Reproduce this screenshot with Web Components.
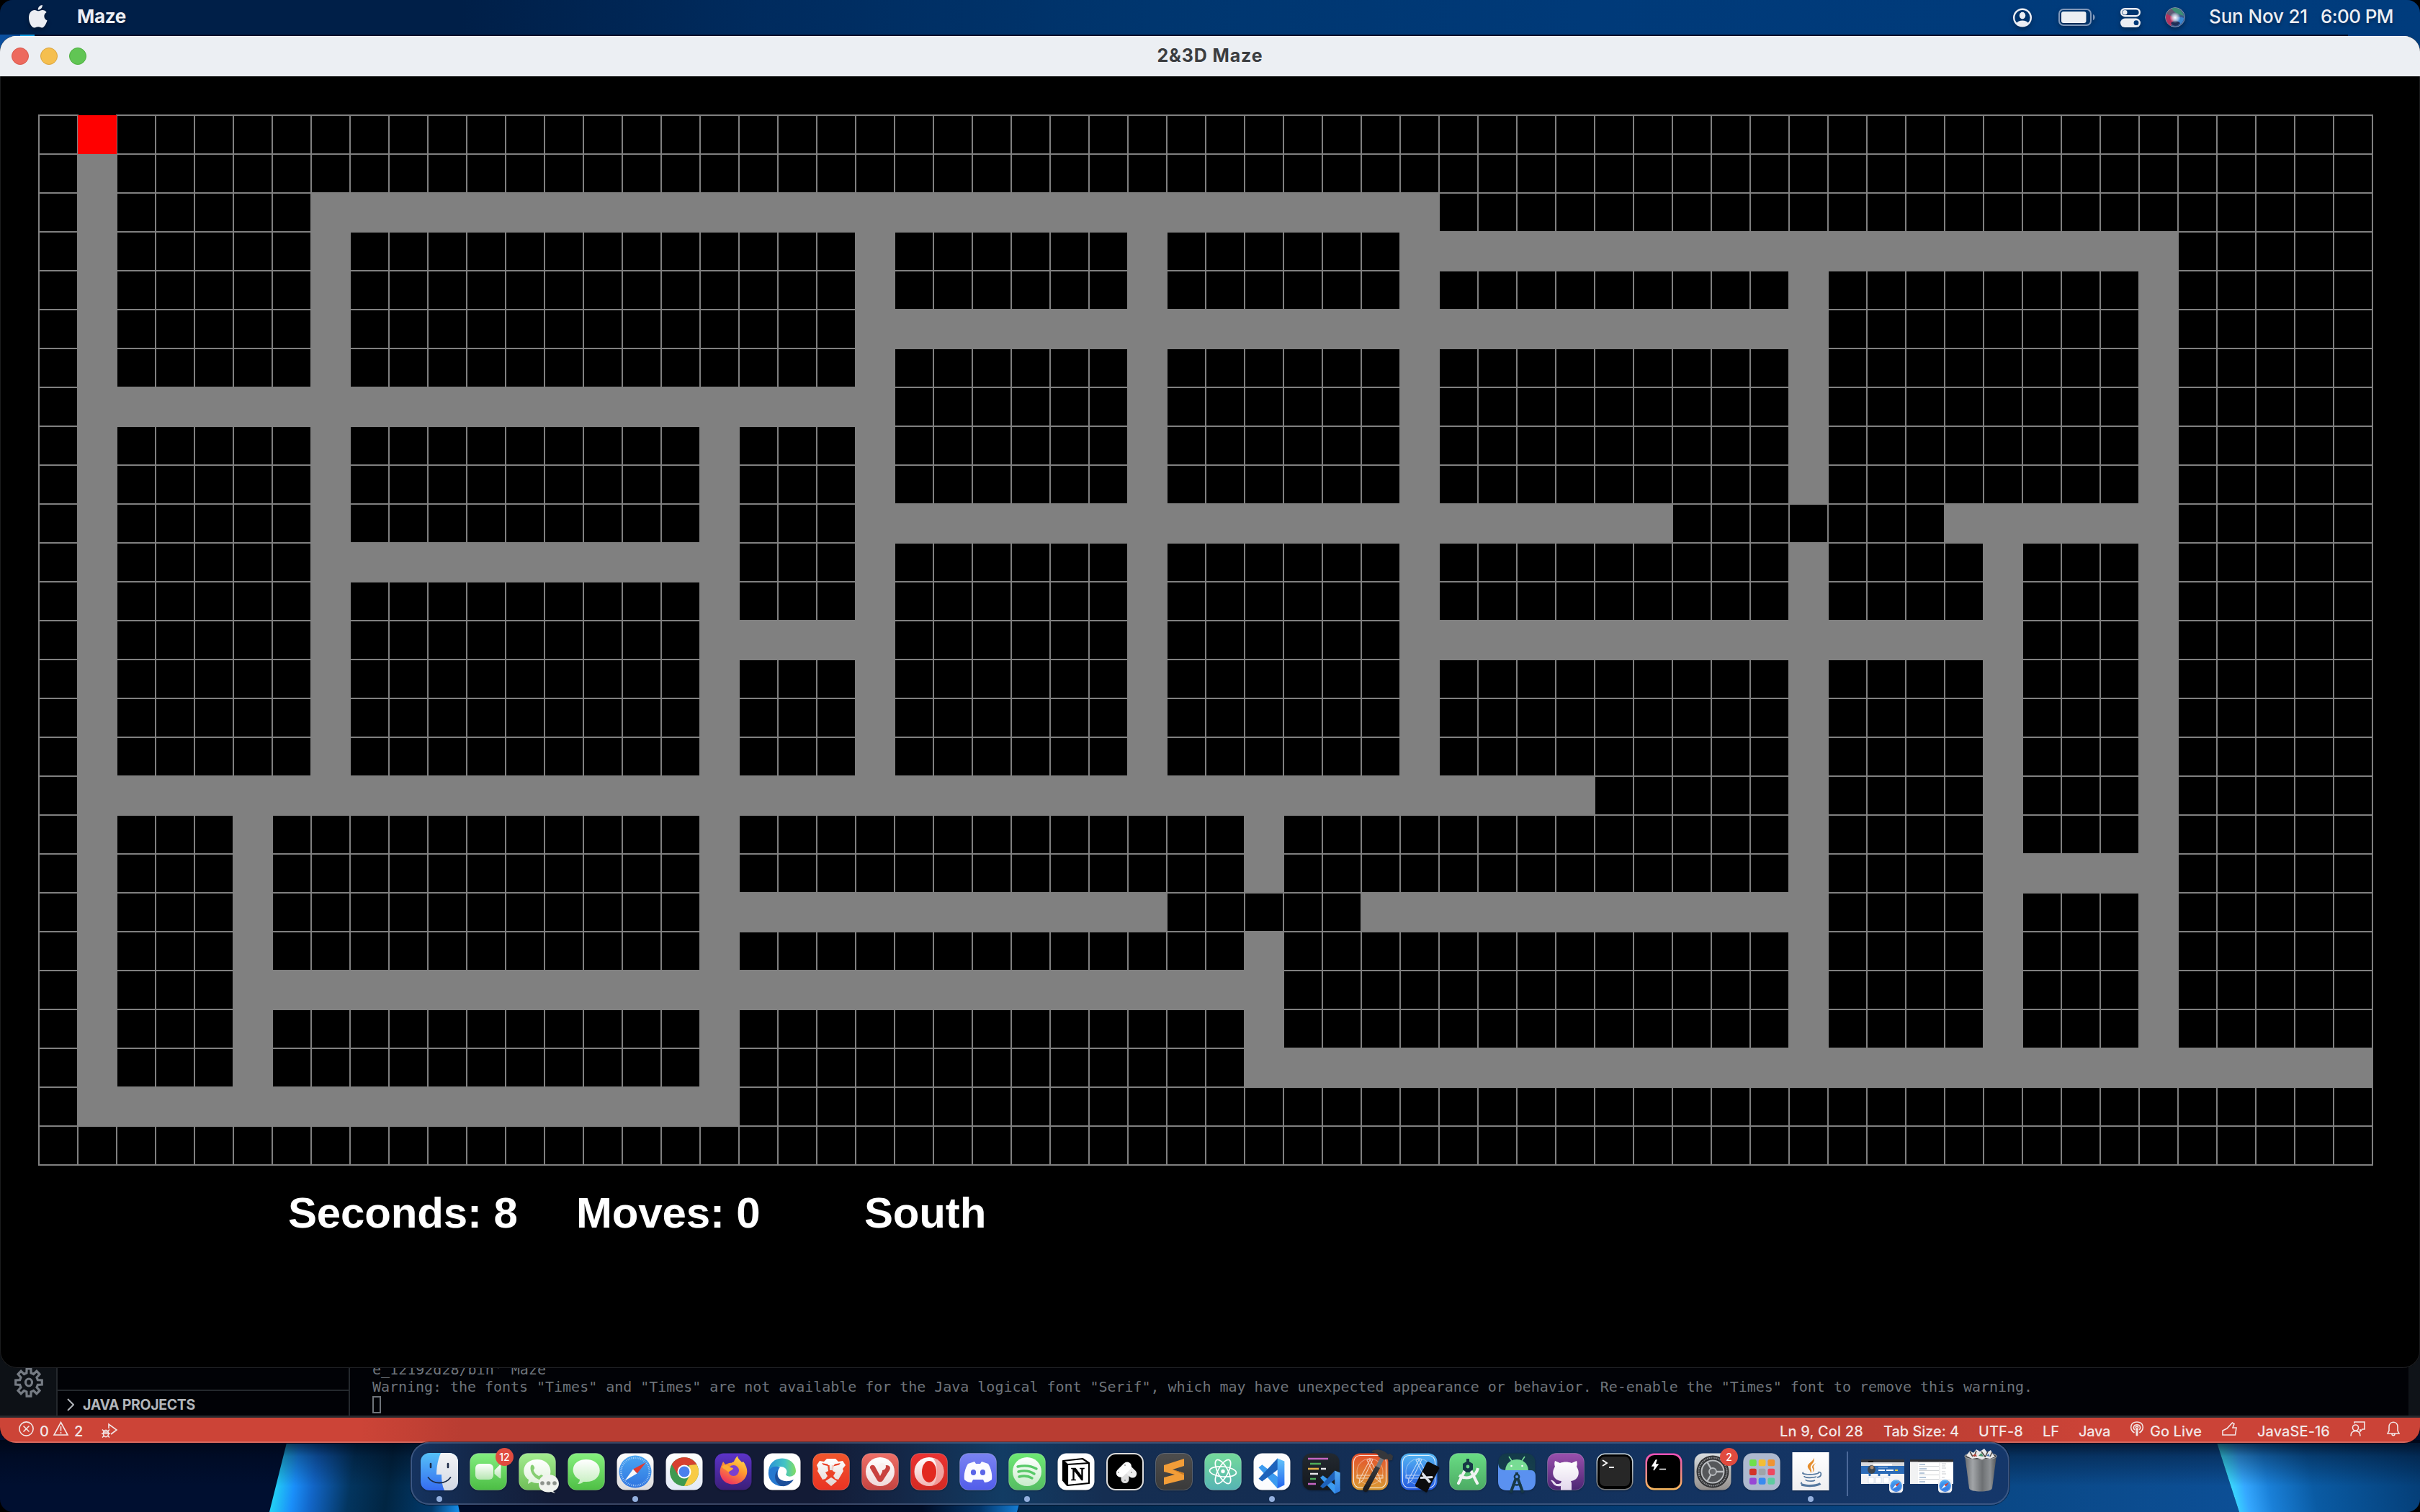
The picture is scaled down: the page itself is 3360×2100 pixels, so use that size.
<!DOCTYPE html>
<html lang="en">
<head>
<meta charset="utf-8">
<title>2&amp;3D Maze</title>
<style>
html,body{margin:0;padding:0;background:#000;overflow:hidden}
body{width:3360px;height:2100px;font-family:Inter,"Liberation Sans",sans-serif}
</style>
</head>
<body>
<mac-desktop>
  <menu-bar></menu-bar>
  <maze-window caption="2&amp;3D Maze">
    <maze-board></maze-board>
    <maze-stats><span>Seconds: 8</span><span>Moves: 0</span><span>South</span></maze-stats>
  </maze-window>
  <code-window></code-window>
  <app-dock></app-dock>
</mac-desktop>
<script>
const define = (name, html, setup) => customElements.define(name, class extends HTMLElement {
  connectedCallback() {
    if (this.shadowRoot) return;
    const root = this.attachShadow({mode: 'open'});
    root.innerHTML = typeof html === 'function' ? html(this) : html;
    if (setup) setup(this, root);
  }
});

/* Text run tracked so that it takes exactly the width given in w. */
define('fit-text', '<style>:host{display:block;flex:none;white-space:pre}span{display:inline-block;white-space:pre}</style><span><slot></slot></span>', (el, root) => {
  const w = +el.getAttribute('w'), s = root.querySelector('span');
  el.style.width = w + 'px';
  const n = el.textContent.length;
  s.style.letterSpacing = ((w - s.getBoundingClientRect().width) / n) + 'px';
});

define('mac-desktop', `<style>
:host{display:flex;flex-direction:column;align-items:center;position:relative;width:3360px;height:2100px;overflow:hidden;border-radius:18px;isolation:isolate}
.wall{position:absolute;inset:0;z-index:-1}
</style>
<svg class="wall" width="3360" height="2100" viewBox="0 0 3360 2100">
<defs>
<linearGradient id="a" gradientUnits="userSpaceOnUse" x1="384" y1="2050" x2="640" y2="2086"><stop offset="0" stop-color="#22cdf5"/><stop offset=".1" stop-color="#1a8ffa"/><stop offset=".2" stop-color="#1266c8"/><stop offset=".4" stop-color="#03355f"/><stop offset=".6" stop-color="#012542"/><stop offset=".85" stop-color="#023a6c"/><stop offset="1" stop-color="#1791ee"/></linearGradient>
<linearGradient id="b" x1="0" x2="1"><stop offset="0" stop-color="#000c28"/><stop offset=".8" stop-color="#000d26"/><stop offset=".9" stop-color="#03366a"/><stop offset=".975" stop-color="#1685e0"/><stop offset="1" stop-color="#2ac4e6"/></linearGradient>
<linearGradient id="c" x1="0" x2="1"><stop offset="0" stop-color="#02284c"/><stop offset=".45" stop-color="#043a70"/><stop offset=".8" stop-color="#0a4886"/><stop offset="1" stop-color="#0c4f96"/></linearGradient>
<linearGradient id="d" gradientUnits="userSpaceOnUse" x1="3092" y1="2052" x2="3360" y2="2000"><stop offset="0" stop-color="#3be0ff"/><stop offset=".08" stop-color="#35a8ff"/><stop offset=".2" stop-color="#1a80d8"/><stop offset=".42" stop-color="#0a5ba4"/><stop offset="1" stop-color="#043c74"/></linearGradient>
<linearGradient id="s" x1="0" y1="0" x2="0" y2="1"><stop offset="0" stop-color="#000512" stop-opacity=".8"/><stop offset=".35" stop-color="#000512" stop-opacity=".35"/><stop offset="1" stop-color="#000512" stop-opacity="0"/></linearGradient>
</defs>
<rect width="3360" height="2100" fill="#000f30"/>
<path d="M636 2000h805l-29 100H636z" fill="url(#b)"/>
<path d="M398 2004h222l18 96H374z" fill="url(#a)"/>
<path d="M1436 2004H3078L3109 2100H1413z" fill="url(#c)"/>
<path d="M3078 2004H3360V2100H3109z" fill="url(#d)"/>
<rect y="2000" width="3360" height="64" fill="url(#s)"/>
<rect y="46" width="3360" height="30" fill="#02102a"/>
<rect y="46" width="48" height="30" fill="#0b4f9e"/><rect x="28" y="46" width="20" height="5" fill="#169be0"/>
<rect x="3260" y="46" width="100" height="30" fill="#003c7c"/>
</svg><slot></slot>`);

define('menu-bar', `<style>
:host{display:flex;align-items:center;width:3360px;height:48px;margin-bottom:2px;box-sizing:border-box;padding:0 37px 3px 40px;color:#eceef3;font:500 26px Inter,"Liberation Sans",sans-serif;background:linear-gradient(90deg,#001f48 0,#001f48 640px,#002b5e 1050px,#00366f 1600px,#003a79 2200px,#003c7d)}
svg{display:block;flex:none;overflow:visible;filter:drop-shadow(0 3px 3px rgba(0,0,0,.35))}
.app{font-weight:700;margin-left:41px}
.right{display:flex;align-items:center;margin-left:auto}
fit-text{text-shadow:0 3px 4px rgba(0,0,0,.3)}
</style>
<svg width="26" height="32" viewBox="0 0 26 32" fill="#eceef3"><path d="M13.2 8.3c1.5 0 3.2-1.4 5.8-1.4 2.3 0 4.4 1.2 5.6 3-4.8 2.8-4 9.5.9 11.4C24.4 25.500 21.500 31.500 18.300 31.500c-2 0-2.800-1.200-5.200-1.200s-3.300 1.200-5.200 1.200C4 31.500 0 24.500 0 17.400 0 10.700 3.900 6.900 7.900 6.900c2.500 0 4 1.400 5.300 1.400z"/><path d="M12.800 6.700C12.500 3.300 15.600.1 18.900 0c.3 3.600-2.800 6.700-6.100 6.700z"/></svg>
<fit-text class="app" w="68">Maze</fit-text>
<div class="right">
<svg width="26" height="27" viewBox="0 0 26 27" style="margin-right:37px;margin-top:4px"><circle cx="13" cy="13.500" r="11.800" fill="none" stroke="#eceef3" stroke-width="2.400"/><ellipse cx="13" cy="10.600" rx="4.200" ry="4.900" fill="#eceef3"/><path d="M4.500 21.500c3-5.500 14-5.500 17 0-4 5.500-13 5.500-17 0z" fill="#eceef3"/></svg>
<svg width="51" height="24" viewBox="0 0 51 24" style="margin-right:35px;margin-top:2px"><rect x="1" y="1" width="44" height="22" rx="6" fill="none" stroke="#8199bb" stroke-width="2"/><rect x="4" y="4" width="34.500" height="16" rx="3" fill="#eceef3"/><path d="M48 8c3.400 1 3.400 7 0 8z" fill="#8199bb"/></svg>
<svg width="28" height="27" viewBox="0 0 28 27" style="margin-right:34px;margin-top:4px"><rect x="1.200" y="1.200" width="25.600" height="10" rx="5" fill="none" stroke="#eceef3" stroke-width="2.400"/><circle cx="6.300" cy="6.200" r="3.200" fill="#eceef3"/><rect y="14.600" width="28" height="12.400" rx="6.200" fill="#eceef3"/><circle cx="22" cy="20.700" r="3.400" fill="#003a79"/></svg>
<svg width="28" height="28" viewBox="0 0 28 28" style="margin-right:33px;margin-top:2px"><defs><radialGradient id="w"><stop offset="0" stop-color="#fff"/><stop offset=".4" stop-color="#dfe6f4" stop-opacity=".8"/><stop offset="1" stop-color="#fff" stop-opacity="0"/></radialGradient><linearGradient id="g" x1="0" y1="0" x2="1" y2="1"><stop offset="0" stop-color="#7c5562"/><stop offset=".5" stop-color="#4b6284"/><stop offset="1" stop-color="#224f9c"/></linearGradient></defs><circle cx="14" cy="14" r="13.400" fill="url(#g)" stroke="#8294ac" stroke-width="1"/><path d="M9 2c7-3 15 2 17 10-6-2-12-3-17-10z" fill="#3d8f76"/><path d="M2 9c-3 7 1 14 6 17 3-5 5-8 4-12C9 12 5 11 2 9z" fill="#b03560"/><path d="M15 15c4-2 8-1 11 0 0 5-4 9-8 10z" fill="#3b86cf"/><path d="M8 22c4-4 9-4 13 0-3 5-10 5-13 0z" fill="#1f2f57"/><circle cx="14" cy="14.500" r="7.500" fill="url(#w)"/></svg>
<fit-text w="137">Sun Nov 21</fit-text><fit-text w="101" style="margin-left:18px">6:00 PM</fit-text>
</div>`);

define('maze-window', el => `<style>
:host{display:flex;flex-direction:column;position:relative;z-index:2;width:3360px;height:1850px;box-sizing:border-box;background:#000;border-radius:22px 22px 24px 24px;overflow:hidden;box-shadow:inset 0 -1px 0 #202124,inset 1px 0 0 #1b1c1d,inset -1px 0 0 #1b1c1d}
header{display:grid;grid-template-columns:1fr auto 1fr;align-items:center;height:56px;flex:none;background:#eceff3;padding:0 16px;color:#3b3d40;font:700 25px Inter,"Liberation Sans",sans-serif;box-shadow:inset 0 1px 0 #fff}
.lights{display:flex;gap:16px}
i{width:24px;height:24px;border-radius:50%;box-sizing:border-box;border:1px solid #d8584c;background:#ed6a5e}
i:nth-child(2){background:#f5bf4f;border-color:#d9a33d}i:nth-child(3){background:#61c554;border-color:#4dae3f}
fit-text{margin-top:-2px}
</style><header><div class="lights"><i></i><i></i><i></i></div><fit-text w="147">${el.getAttribute('caption').replace('&','&amp;')}</fit-text><span></span></header><slot></slot>`);

const CELL = 54, COLS = 60, ROWS = 27;
/* Corridors as [row, first column, last column] and [column, first row, last row]. */
const ACROSS = [[2,7,35],[3,35,54],[5,21,45],[7,1,21],[10,21,41],[10,49,54],[11,7,17],[13,17,21],[13,35,50],[17,1,39],[19,50,54],[20,17,28],[20,34,45],[22,5,31],[24,31,59],[25,1,17]];
const DOWN = [[1,1,25],[5,17,25],[7,2,17],[17,7,25],[21,2,17],[28,2,17],[31,17,19],[31,21,24],[35,2,17],[45,3,9],[45,11,24],[50,10,24],[54,3,24]];
define('maze-board', () => {
  let lines = '', fills = '';
  for (let c = 0; c <= COLS; c++) lines += `M${c*CELL} 0V${ROWS*CELL}`;
  for (let r = 0; r <= ROWS; r++) lines += `M-1 ${r*CELL}H${COLS*CELL+1}`;
  const rect = (x, y, w, h) => `<rect x="${x*CELL-1}" y="${y*CELL-1}" width="${w*CELL+2}" height="${h*CELL+2}"/>`;
  ACROSS.forEach(([r, a, b]) => fills += rect(a, r, b-a+1, 1));
  DOWN.forEach(([c, a, b]) => fills += rect(c, a, 1, b-a+1));
  return `<style>:host{display:block;margin:54px 0 0 54px}svg{display:block;overflow:visible}</style>
<svg width="${COLS*CELL}" height="${ROWS*CELL}" shape-rendering="crispEdges"><path d="${lines}" stroke="#808080" stroke-width="2"/><g fill="#808080">${fills}</g><rect x="${CELL+1}" y="-1" width="${CELL-2}" height="1" fill="#000"/><rect x="${CELL}" width="${CELL}" height="${CELL}" fill="#f00"/></svg>`;
});

define('maze-stats', `<style>:host{display:flex;margin:32px 0 0 400px;color:#fff;font:700 60px/70px "Liberation Sans",Arial,sans-serif;letter-spacing:-.15px}::slotted(span){width:400px;white-space:pre}</style><slot></slot>`);

define('code-window', `<style>
:host{display:flex;flex-direction:column;position:relative;z-index:1;width:3360px;height:130px;margin-top:-26px;box-sizing:border-box;border-radius:0 0 22px 22px;overflow:hidden;background:#010206;box-shadow:0 0 0 1px #00081c;flex:none}
.work{display:flex;height:92px;flex:none;border-bottom:3px solid #27292e}
.activity{width:80px;box-sizing:border-box;padding:25px 0 0 20px;background:#0d1116;border-right:2px solid #24282d}
.side{width:406px;box-sizing:border-box;border-right:2px solid #24282d;display:flex;flex-direction:column}
.side .top{height:58px;border-bottom:2px solid #24282d;box-sizing:border-box;flex:none}
.side .row{display:flex;align-items:center;height:34px;padding:2px 0 0 13px;box-sizing:content-box;gap:12px;color:#b1b5ba;font:700 19.500px/34px Inter,sans-serif}
.term{flex:1;padding:16px 0 0 31px;color:#6e747b;font:20px/24px "DejaVu Sans Mono",monospace;overflow:hidden;box-sizing:border-box;height:92px}
.cur{width:12px;height:24px;box-sizing:border-box;border:2px solid #6e747b;margin-top:1px}
.edge{width:16px;background:#0f1318}
.status{display:flex;align-items:center;height:35px;padding:0 28px 0 26px;color:#f2e6e6;font:500 20px Inter,sans-serif;background:linear-gradient(90deg,#cc4437 0,#cc4437 500px,#b93d32 640px,#b93d32 2600px,#cb4337 2900px,#cb4337);box-shadow:inset 0 -2px 0 rgba(255,255,255,.2)}
.status fit-text{margin-top:2px}
.status svg{flex:none;display:block;fill:none;stroke:#f2e6e6;stroke-width:1.600;overflow:visible;margin-top:-5px}
.sp{flex:1}
svg{display:block}
</style>
<div class="work"><div class="activity"><svg width="40" height="42" viewBox="-20 -21 40 42" fill="none" stroke="#757b83" stroke-width="3.200" id="gear"></svg></div>
<div class="side"><div class="top"></div><div class="row"><svg width="10" height="18" viewBox="0 0 10 18" fill="none" stroke="#b1b5ba" stroke-width="2"><path d="M1 1l8 8-8 8"/></svg><fit-text w="156">JAVA PROJECTS</fit-text></div></div>
<div class="term"><fit-text w="241">e_12192d28/bin' Maze</fit-text><fit-text w="2305" id="warn">Warning: the fonts "Times" and "Times" are not available for the Java logical font "Serif", which may have unexpected appearance or behavior. Re-enable the "Times" font to remove this warning.</fit-text><div class="cur"></div></div><div class="edge"></div></div>
<div class="status">
<svg width="21" height="21" viewBox="0 0 21 21"><circle cx="10.500" cy="10.500" r="9.600"/><path d="M6.500 6.500l8 8M14.500 6.500l-8 8"/></svg>
<fit-text w="12" style="margin-left:8px">0</fit-text>
<svg width="21" height="20" viewBox="0 0 21 20" style="margin-left:7px"><path d="M10.500 1.500L20 19H1zM10.500 7v6.500M10.500 15v2"/></svg>
<fit-text w="12" style="margin-left:8px">2</fit-text>
<svg width="22" height="20" viewBox="0 0 22 20" style="margin-left:26px;margin-top:0"><path d="M10 7V1l11 8-8 6"/><ellipse cx="6" cy="14" rx="3.600" ry="4.600"/><path d="M0 14h12M1 8.500l2.500 2.500M11 8.500L8.500 11M1 19.500L3.500 17M11 19.500L8.500 17M3 12h6"/></svg>
<span class="sp"></span>
<fit-text w="116">Ln 9, Col 28</fit-text>
<fit-text w="105" style="margin-left:28px">Tab Size: 4</fit-text>
<fit-text w="62" style="margin-left:27px">UTF-8</fit-text>
<fit-text w="23" style="margin-left:27px">LF</fit-text>
<fit-text w="44" style="margin-left:27px">Java</fit-text>
<svg width="18" height="20" viewBox="0 0 18 20" style="margin-left:28px"><path d="M5.500 16C-2.500 11 0 1 9 1s11.500 10 3.500 15M6 12C2.500 9 5 4.800 9 4.800S15.500 9 12 12"/><circle cx="9" cy="8.500" r="1.600"/><path d="M8 11.500h2l-.4 8h-1.200z"/></svg>
<fit-text w="72" style="margin-left:9px">Go Live</fit-text>
<svg width="21" height="19" viewBox="0 0 21 19" style="margin-left:28px"><path d="M1 18V12L7 9 14.500 1l2.500 1.500-2 5.500h5l-1.500 10z"/></svg>
<fit-text w="101" style="margin-left:28px">JavaSE-16</fit-text>
<svg width="21" height="21" viewBox="0 0 21 21" style="margin-left:28px"><path d="M6 3V1h14v10h-3l-3 3v-3"/><circle cx="7.500" cy="9" r="4"/><path d="M1 20.500c0-4.500 2.500-7 6.500-7s6.500 2.500 6.500 7"/></svg>
<svg width="18" height="21" viewBox="0 0 18 21" style="margin-left:30px"><path d="M1 17l2-4V8c0-9 12-9 12 0v5l2 4zM7 17.500c0 3 4 3 4 0"/></svg>
</div>`, (el, root) => {
  let d = '';
  for (let i = 0; i < 8; i++) {
    const p = (a, r) => { const t = (i*45 + a - 90) * Math.PI/180; return (r*Math.cos(t)).toFixed(1) + ' ' + (r*1.05*Math.sin(t)).toFixed(1); };
    d += (i ? 'L' : 'M') + p(-9, 18.5) + 'L' + p(9, 18.5) + 'L' + p(14, 12.8) + 'L' + p(31, 12.8);
  }
  root.getElementById('gear').innerHTML = `<path d="${d}z"/><ellipse rx="4.500" ry="5"/>`;
});

/* Dock artwork on a 52 x 52 tile. */
const tile = (fill, extra = '') => `<rect x=".5" y=".5" width="51" height="51" rx="12" fill="${fill}" ${extra}/>`;
const grad = (id, a, b) => `<linearGradient id="${id}" x1="0" y1="0" x2="0" y2="1"><stop offset="0" stop-color="${a}"/><stop offset="1" stop-color="${b}"/></linearGradient>`;
const RIM = 'stroke="#fff" stroke-opacity=".22"';
const compass = (() => { let t = ''; for (let i = 0; i < 48; i++) { const a = i*Math.PI/24; t += `M${(26+21*Math.cos(a)).toFixed(1)} ${(26+20.500*Math.sin(a)).toFixed(1)}L${(26+18.500*Math.cos(a)).toFixed(1)} ${(26+18*Math.sin(a)).toFixed(1)}`; }
  return `<circle cx="26" cy="26" r="22.500" fill="url(#c)"/><path d="${t}" stroke="#c8e2f8" stroke-width=".8"/><path d="M41 13L23 22.500l5.500 6z" fill="#e23b30"/><path d="M11.500 38.500L23 22.500l5.500 6z" fill="#f6f7f9"/>`; })();
const star = '<g fill="none" stroke="#fff" stroke-opacity=".65" stroke-width="1.100"><rect x="3.500" y="3.500" width="45" height="45" rx="9" stroke-opacity=".85"/><circle cx="26" cy="26" r="18" stroke-opacity=".35"/><path d="M22 10l3.500-2L39 33l2 8-6-5zM30 9l-3-1L12 36l-1 6 5-4zM8 31h36v4H8z"/></g>';
const code = (x, y, s) => `<g transform="translate(${x} ${y}) scale(${s})"><path d="M0 11l5-4 32 25-10 9z" fill="#3c9bf0"/><path d="M0 27l5 4L37 7 27-2z" fill="#1d62bb"/><path d="M27-2l10 4v34l-10 5z" fill="url(#v)"/></g>`;
const ICONS = {
finder: () => `<defs>${grad('f','#55c1f8','#356bf0')}${grad('h','#f3f4f6','#d3d9e4')}<clipPath id="k"><rect width="52" height="52" rx="12"/></clipPath></defs><g clip-path="url(#k)"><rect width="52" height="52" fill="url(#f)"/><path d="M28 0c-4 9-6 20-6 30h7c0 8 1 16 4 22h19V0z" fill="url(#h)"/></g><path d="M14 15v5M38 15v5" stroke="#1d2b47" stroke-width="2.600" stroke-linecap="round"/><path d="M10.500 34c7 10 24 10 31 0" fill="none" stroke="#1c2c4a" stroke-width="1.800" stroke-linecap="round"/>`,
facetime: () => `<defs>${grad('f','#83ee80','#4cbd44')}${grad('h','#fff','#b6e6b2')}</defs>${tile('url(#f)',RIM)}<rect x="8" y="15" width="25" height="22" rx="6" fill="url(#h)"/><path d="M34.500 24l7-7c1-1 2 0 2 1v16c0 1-1 2-2 1l-7-6z" fill="url(#h)"/>`,
whatsapp: () => `<defs>${grad('f','#a3ec90','#6fbe57')}${grad('h','#fff','#dff2da')}</defs>${tile('url(#f)',RIM)}<path d="M26 9c24 0 25 33 0 33-3 0-6-1-8-2l-5 3 1-6C2 29 6 9 26 9z" fill="url(#h)"/><path d="M17 18c2-3 4-1 5 2 1 2-2 3-1 5 2 4 5 6 7 7 2 0 3-3 5-1 3 2 3 3 1 5-7 5-20-8-17-18z" fill="#86ce72"/><path d="M41 30c18 0 19 20 7 23l3 3-6-2c-8 2-17-2-17-11 0-8 6-13 13-13z" fill="#f0f3ee"/><g fill="#8d938c"><circle cx="33" cy="42" r="2.800"/><circle cx="41.500" cy="42" r="2.800"/><circle cx="50" cy="42" r="2.800"/></g>`,
messages: () => `<defs>${grad('f','#86f07f','#4fbf45')}${grad('h','#fff','#c6eec0')}</defs>${tile('url(#f)',RIM)}<path d="M26 9c25 0 25 31 0 31h-4c-2 2-4 3-8 3 2-2 3-4 3-6C3 31 4 9 26 9z" fill="url(#h)"/>`,
safari: () => `<defs>${grad('f','#fff','#dcdbdc')}${grad('c','#4aa6f2','#2f74e0')}</defs>${tile('url(#f)')}${compass}`,
chrome: () => `<defs>${grad('f','#fff','#e3e9f7')}</defs>${tile('url(#f)')}<circle cx="26" cy="26" r="20" fill="#3f9a50"/><path d="M8.700 16A20 20 0 0 1 43.300 16L26 18z" fill="#d6402f"/><path d="M43.300 16A20 20 0 0 1 26 46l8-16-1-13z" fill="#f8cb46"/><path d="M8.700 16h34.600H26l-9 14z" fill="#d6402f"/><circle cx="26" cy="26" r="9.500" fill="#fff"/><circle cx="26" cy="26" r="7.500" fill="#4a80ec"/>`,
firefox: () => `<defs>${grad('f','#5c33c9','#3b1f78')}<linearGradient id="h" x1=".8" y1="0" x2=".3" y2="1"><stop offset="0" stop-color="#ffe24f"/><stop offset=".45" stop-color="#ff9a2f"/><stop offset="1" stop-color="#ee2f63"/></linearGradient></defs>${tile('url(#f)')}<path d="M9 19l3-7 3 4c4-1 6-3 8-2l4-2c1-3 3-6 5-8 0 4 4 6 6 9l2-1c7 9 6 17 3 22-7 12-26 13-33 1-3-6-3-11-1-16z" fill="url(#h)"/><circle cx="26.500" cy="24.500" r="7.500" fill="#7b3fd0"/><path d="M10 19c5-4 8-3 12 1l4 1c-1 4-5 3-6 6-4-4-7-4-10-8z" fill="#ffab35"/>`,
edge: () => `<defs><linearGradient id="f"><stop offset="0" stop-color="#2a92d6"/><stop offset=".6" stop-color="#43c4c4"/><stop offset="1" stop-color="#82dd62"/></linearGradient></defs>${tile('#fff')}<path d="M7 26C8 1 44 2 45 25c0 8-11 10-14 5 4-6-1-12-9-11-8 0-13 4-15 7z" fill="url(#f)"/><path d="M7 26c2-6 9-9 16-6-5 5-5 18 6 22l-3 4C15 46 6 38 7 26z" fill="#2478cf"/><path d="M20 24c-4 9 5 20 22 13-4 6-10 10-17 9-9-4-12-15-5-22z" fill="#1c4f9b"/>`,
brave: () => `<defs>${grad('f','#f0562c','#ea3323')}${grad('h','#fff','#e2d5d2')}</defs>${tile('url(#f)',RIM)}<path d="M6 17l4-6 6 1 4-4h12l4 4 6-1 4 6-4 5 1 3-7 12-4-1-3-4 3-5-4-2 1-8h-8l1 8-4 2 3 5-3 4-4 1-7-12 1-3zM18 39l8-5 8 5-2 2-6 5-6-5z" fill="url(#h)"/><path d="M13 14l8 1.500 2 3-8-2zM39 14l-8 1.500-2 3 8-2z" fill="#ea4228"/><path d="M23.500 14h5l-.5 10h-4z" fill="url(#h)"/>`,
vivaldi: () => `<defs>${grad('f','#ee7068','#c44340')}${grad('h','#fff','#f0dada')}</defs>${tile('url(#f)',RIM)}<circle cx="26" cy="26" r="20" fill="url(#h)"/><path d="M12 21c-1-4 5-6 7-2l7 13 3-6c0-5 2-9 6-9 5 0 6 4 4 7l-9 14c-2 3-6 3-8 0z" fill="#c9423f"/><circle cx="29" cy="19" r="5" fill="#faf0ef"/>`,
opera: () => `<defs>${grad('f','#ec3333','#d22a23')}${grad('h','#fff','#f3b8b6')}</defs>${tile('url(#f)',RIM)}<ellipse cx="26" cy="26" rx="20.500" ry="20" fill="url(#h)"/><path d="M30 7c9 3 9 35 0 38 22-2 22-36 0-38z" fill="#ef8a88" opacity=".7"/><ellipse cx="26" cy="26" rx="10" ry="15" fill="#e2291f"/>`,
discord: () => `<defs>${grad('f','#7a83f2','#525dea')}</defs>${tile('url(#f)',RIM)}<path d="M12 15l9-3 2 3h6l2-3 9 3c4 6 6 15 5 22-4 3-7 4-10 4l-2-4H19l-2 4c-3 0-7-1-10-4-1-7 1-16 5-22z" fill="#fbfbff"/><ellipse cx="19.500" cy="27" rx="3.600" ry="4" fill="#5a65e8"/><ellipse cx="32.500" cy="27" rx="3.600" ry="4" fill="#5a65e8"/>`,
spotify: () => `<defs>${grad('f','#6ee874','#55bd62')}${grad('h','#fff','#c9eccb')}</defs>${tile('url(#f)',RIM)}<circle cx="26" cy="26" r="20" fill="url(#h)"/><path d="M13 19c9-2 19-1 26 3M14 26c8-2 16-1 22 3M15 33c7-2 13-1 18 2" fill="none" stroke="#58c968" stroke-width="3.400" stroke-linecap="round"/>`,
notion: () => `${tile('#fff')}<path d="M8 11l27-3 9 6v28l-30 3-6-7z" fill="#fff" stroke="#000" stroke-width="2.200" stroke-linejoin="round"/><path d="M8 11l6 5v29M14 16l30-2" fill="none" stroke="#000" stroke-width="2.200"/><path d="M8 11l6 5v29l-6-7z"/><text x="28.500" y="38" text-anchor="middle" font-family="Liberation Serif" font-weight="700" font-size="26" stroke="#000" stroke-width=".6">N</text>`,
patch: () => `<rect x="1" y="1" width="50" height="50" rx="12" fill="#000" stroke="#dcdcdc" stroke-width="2"/><g><rect x="20.500" y="21" width="11" height="21" rx="5.500" fill="#dedede"/><rect x="22" y="14" width="11.500" height="24" rx="5.700" fill="#ededed" transform="rotate(-45 28 20)"/><rect x="19" y="10" width="12" height="25" rx="6" fill="#fff" transform="rotate(45 24 22)"/></g><g fill="#555"><circle cx="26" cy="17" r=".8"/><circle cx="17" cy="27" r=".8"/><circle cx="35" cy="27" r=".8"/><circle cx="26" cy="38" r=".8"/></g>`,
sublime: () => `<defs>${grad('f','#4d4d4d','#3a3a3a')}</defs>${tile('url(#f)',RIM)}<path d="M12 17l28-9v10l-16 5 16 5v9l-28 7V34l15-4-15-4z" fill="#f29d38"/><path d="M24 23l16 5v3z" fill="#d17f22"/>`,
atom: () => `<defs>${grad('f','#74da9a','#56b4b4')}</defs>${tile('url(#f)',RIM)}<g fill="none" stroke="#fff" stroke-width="1.700"><ellipse cx="26" cy="26" rx="18.500" ry="7" transform="rotate(5 26 26)"/><ellipse cx="26" cy="26" rx="18.500" ry="7" transform="rotate(62 26 26)"/><ellipse cx="26" cy="26" rx="18.500" ry="7" transform="rotate(118 26 26)"/></g><circle cx="26" cy="25.500" r="2.700" fill="#fff"/>`,
vscode: () => `<defs>${grad('v','#63c4fa','#2263ee')}</defs>${tile('#fcfcfe')}${code(7.5,9.5,.97)}`,
insiders: () => `<defs>${grad('f','#232930','#14181d')}${grad('v','#55aaf2','#2b7be0')}</defs>${tile('url(#f)')}<g stroke-width="2.600"><path d="M8 8h28M8 43h11" stroke="#c565c2"/><path d="M11 15h15M11 36h8" stroke="#4fae5a"/><path d="M8 22h15" stroke="#e5b045"/><path d="M26 22h7M11 29h11" stroke="#e6e6ea"/></g>${code(25,26,.75)}`,
xcode: () => `<defs>${grad('f','#e5502c','#d99b34')}${grad('h','#3c3d41','#17181b')}</defs>${tile('url(#f)')}${star}<path d="M41 5l5 2.500-7 14.500-5-2.500z" fill="#77797d"/><path d="M34 18l6 3-16.500 31c-2 4-9 1-7-3z" fill="url(#h)"/><path d="M29-3c8-3 17-1 22 5l3-1 4 3-1 6-5 .5-2-2-4 1-8-4c0-4-4-6-9-6.500z" fill="#36373b"/>`,
simulator: () => `<defs>${grad('f','#55b6f3','#2358e0')}</defs>${tile('url(#f)')}${star}<path d="M39 12l14 7c1 1 2 2 1 3L38 53c-1 2-2 2-3 1l-13-7c-1-1-1-2-1-3l16-31z" fill="#0c0c0d"/><path d="M31 26l12 14-3 2-10-12zM28 33l17-1 .5 3L28 36z" fill="#dfe3ea"/>`,
studio: () => `<defs>${grad('f','#69dc84','#4cab64')}</defs>${tile('url(#f)',RIM)}<path d="M13 42l11-22M39 42L28 20" stroke="#f1f3f2" stroke-width="4" stroke-linecap="round"/><path d="M14 31c10 7 23 3 26-10" fill="none" stroke="#f1f3f2" stroke-width="4"/><path d="M24 8h4v4l5 3v8l-5 4h-4l-5-4v-8l5-3z" fill="#173846"/><circle cx="26" cy="19" r="2.400" fill="#69dc84"/>`,
preview: () => `<defs>${grad('f','#133a49','#1a4250')}</defs>${tile('url(#f)')}<path d="M0 13c0 10 6 11 14 11h32c4 0 6 4 6 8v7c0 9-5 13-12 13H12C4 52 0 47 0 40z" fill="#5a91f0"/><path d="M10 24c1-20 31-20 32 0z" fill="#78dc94"/><path d="M15 5l4 6M37 5l-4 6" stroke="#78dc94" stroke-width="1.600"/><circle cx="18.500" cy="18" r="1.300" fill="#fff"/><circle cx="33.500" cy="18" r="1.300" fill="#fff"/><circle cx="26" cy="33" r="3.200" fill="none" stroke="#173846" stroke-width="2.400"/><path d="M26 27v3M24.500 36l-7 19M27.500 36l7 19" stroke="#173846" stroke-width="4"/><path d="M20 43c4 2 8 2 12 0" stroke="#173846" stroke-width="2.400" fill="none"/>`,
github: () => `<defs>${grad('f','#9a50ad','#4c2673')}${grad('h','#fff','#e3d8ec')}</defs>${tile('url(#f)',RIM)}<path d="M11 11l7 3c5-2 11-2 16 0l7-3c1 3 1 5 0 8 6 9 2 19-8 20 1 2 1 3 1 5v7.500H19V46c-6 1-9-1-11-4-1-2-2-3-3-4 4-1 6 4 8 5 2 0 4 0 6-1l1-3C9 38 5 28 11 19c-1-3-1-5 0-8z" fill="url(#h)"/>`,
terminal: () => `<defs>${grad('f','#dbe9ef','#777')}</defs>${tile('url(#f)')}<rect x="2" y="2" width="48" height="48" rx="10" fill="#000"/><rect x="5" y="5" width="42" height="41" rx="7" fill="#272727"/><path d="M9 10l6 4-6 4M18 20h7" fill="none" stroke="#fff" stroke-width="1.900"/>`,
hyper: () => `<defs>${grad('f','#ee4fb8','#f8b95c')}</defs>${tile('url(#f)')}<rect x="3" y="3" width="46" height="46" rx="10" fill="#000"/><path d="M15 10l-5 8h4l-2 6 6-8h-4l2-6zM20 22.500h9" fill="#fff" stroke="#fff" stroke-width="1.300"/>`,
settings: () => `<defs>${grad('f','#d8dcde','#938f8c')}</defs>${tile('url(#f)')}<circle cx="26" cy="26" r="22.500" fill="#303133"/><circle cx="26" cy="26" r="19.500" fill="none" stroke="#8a8c8f" stroke-width="2.200" stroke-dasharray="1.600 1"/><circle cx="26" cy="26" r="15.500" fill="#55575a" stroke="#b9bcbf" stroke-width="2"/><path d="M26 26h16M26 26l-8-14M26 26l-8 14" stroke="#b9bcbf" stroke-width="2.400"/><circle cx="26" cy="26" r="5" fill="#66686b" stroke="#b9bcbf" stroke-width="1.800"/>`,
launchpad: () => { const c = ['#6fdf4b','#f3bd35','#ef9334','#d23328','#9fa4a9','#ee4860','#9747d5','#3a8af0','#5fcba0']; return tile('#adb9cf', RIM) + c.map((f, i) => `<rect x="${9 + i%3*12.700}" y="${9 + (i/3|0)*12.700}" width="9.800" height="9.300" rx="2.200" fill="${f}"/>`).join(''); },
java: () => `<defs>${grad('f','#fff','#efeff1')}</defs><rect x=".5" y="-1" width="51" height="53" fill="url(#f)"/><path d="M30 5c3 6-10 9-8 15 1 3 4 4 4 8 3-4-1-6 0-9 1-4 7-6 4-14zM33 14c-5 3-6 5-4 8 1 2 0 4-1 5 5-3 2-6 2-8 0-1 1-3 3-5z" fill="#e58d2c"/><g fill="none" stroke="#55789f" stroke-width="1.700"><path d="M16 27c-6 3 14 4 21 1M36 27c6-2 6 6-1 7M17 32c0 3 12 3 17 1M19 37c0 2 9 3 13 1M14 41c-7 3 15 6 25 1M13 45c9 2 21 2 27-2"/></g>`
};
define('dock-icon', el => `<style>
:host{display:flex;flex-direction:column;align-items:center;position:relative;width:52px;flex:none}
svg{display:block;overflow:visible;filter:drop-shadow(0 1px 1px rgba(0,0,0,.3))}
.dot{width:8px;height:8px;border-radius:50%;background:#93afdd;margin-top:8px;visibility:${el.hasAttribute('running') ? 'visible' : 'hidden'}}
.badge{position:absolute;right:-9px;top:-7px;width:25px;height:25px;border-radius:50%;background:#e04b3f;color:#fff;font:500 14px/25px Inter,sans-serif;text-align:center}
</style><svg width="52" height="52" viewBox="0 0 52 52">${ICONS[el.getAttribute('name')]()}</svg><div class="dot"></div>${el.hasAttribute('badge') ? `<div class="badge">${el.getAttribute('badge')}</div>` : ''}`);

define('dock-preview', el => {
  const site = el.getAttribute('kind') === 'site';
  const page = site
    ? `<rect width="60" height="34" fill="#f3f4f6"/><rect width="60" height="4" fill="#34363b"/><rect x="10" y="2.500" width="7" height="2" fill="#000"/><rect y="4" width="60" height="5" fill="#d9dbde"/><rect y="9" width="60" height="11" fill="#2c6cb8"/><rect x="17" y="6" width="26" height="2.500" fill="#fff"/><ellipse cx="14.500" cy="14" rx="5.500" ry="6" fill="#3c4650"/><circle cx="15" cy="11" r="2.500" fill="#a98b70"/><path d="M24 15h9M35 15h10" stroke="#fff" stroke-width="2"/><path d="M24 11h13" stroke="#9dc0e8"/><path d="M47 15h4" stroke="#f1cf3b" stroke-width="2"/><g fill="#2c6cb8"><circle cx="12" cy="21.500" r="1.700"/><circle cx="25" cy="21.500" r="1.700"/><circle cx="39" cy="21.500" r="1.700"/></g><g fill="#fff" stroke="#c5d4e5" stroke-width=".6"><rect x="10" y="25" width="8" height="8"/><rect x="20" y="25" width="8" height="8"/><rect x="31" y="25" width="8" height="8"/></g>`
    : `<rect width="60" height="34" fill="#fff"/><rect width="60" height="3.500" fill="#2c2d31"/><rect y="3.500" width="11" height="30.500" fill="#f1f2f3"/><path d="M41 3.500v30.500" stroke="#e0e1e3"/><path d="M12 9.500h28M12 15.500h28M12 21.500h28M12 27.500h28" stroke="#c3c6ca" stroke-width=".8"/><path d="M13 7h8M13 13h10M13 19h7M13 25h9M13 31h8" stroke="#6c8fb5"/><path d="M44 6h6M44 9h5M44 12h6M44 17h5M44 20h6M44 25h4" stroke="#c9ccd0"/>`;
  return `<style>:host{display:block;width:60px;height:45px;flex:none;margin-top:9px}svg{display:block;overflow:visible}</style><svg width="60" height="45" viewBox="0 0 60 45"><defs>${grad('c','#4aa6f2','#2f74e0')}</defs>${page}<g transform="translate(39 27) scale(.37)"><rect width="52" height="52" rx="12" fill="#f2f2f4"/>${compass}</g></svg>`;
});

define('dock-trash', `<style>:host{display:block;width:46px;height:60px;flex:none;margin-top:-5px}svg{display:block;overflow:visible}</style>
<svg width="46" height="60" viewBox="0 0 46 60"><defs><linearGradient id="t"><stop offset="0" stop-color="#6a6d70"/><stop offset=".25" stop-color="#a2a5a8"/><stop offset=".55" stop-color="#6d7073"/><stop offset=".8" stop-color="#8e9194"/><stop offset="1" stop-color="#505356"/></linearGradient></defs>
<path d="M1 8l6 46c1 6 31 6 32 0l6-46z" fill="url(#t)"/><ellipse cx="23" cy="9.500" rx="22" ry="5" fill="#3a3c3e" stroke="#9da0a3" stroke-width="1.200"/>
<path d="M3 9l5-7 5 3 4-5 5 3 6-4 4 5 5-3 3 6 3 3-7 3-6-1-5 2-7-2-7 1z" fill="#e9e9ea"/><path d="M8 3l4 7M17 2l-3 8M24 3l5 7M33 3l-4 8M39 4l-3 6" stroke="#4e4a48" stroke-width="1.600"/><path d="M11 9l5-3 2 4z" fill="#b5473c"/><path d="M20 9l4-4 3 5z" fill="#45956d"/><path d="M31 9l3-3 2 4z" fill="#4b77b4"/></svg>`);

define('app-dock', () => {
  const running = ['finder','safari','spotify','vscode','java'], badges = {facetime: 12, settings: 2};
  const items = Object.keys(ICONS).map(n => `<dock-icon name="${n}"${running.includes(n) ? ' running' : ''}${badges[n] ? ` badge="${badges[n]}"` : ''}></dock-icon>`).join('');
  return `<style>:host{display:flex;align-items:flex-start;gap:16px;position:relative;z-index:3;flex:none;width:2220px;height:87px;margin-top:-1px;box-sizing:border-box;padding:13px 0 0 12px;border:2px solid rgba(120,140,175,.38);border-radius:26px;background:linear-gradient(90deg,#15335f 0,#142748 90px,#131b36 200px,#131b36 560px,#142747 680px,#123c64 820px,#152e52 960px,#142d52 1200px,#13315b 1500px,#15376a);box-shadow:0 0 0 1px rgba(0,6,20,.55)}
.line{width:2px;height:62px;margin:-2px 2px 0 8px;background:#4b6899;flex:none}dock-trash{margin-left:-1px}dock-preview+dock-preview{margin-left:-8px}</style>${items}<div class="line"></div><dock-preview kind="site"></dock-preview><dock-preview kind="list"></dock-preview><dock-trash></dock-trash>`;
});
</script>
</body>
</html>
